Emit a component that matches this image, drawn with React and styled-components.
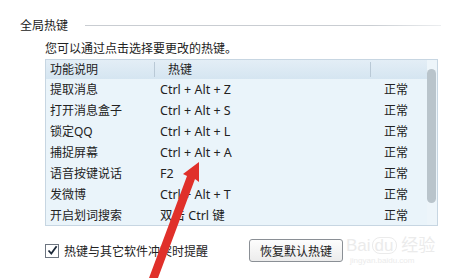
import React from 'react'
import styled, { createGlobalStyle } from 'styled-components'

const GlobalStyle = createGlobalStyle`
  body {
    margin: 0;
    background: #fff;
    font-family: "Noto Sans", "Noto Sans CJK SC", sans-serif;
    color: #222;
  }
`

const rows = [
  ['提取消息', 'Ctrl + Alt + Z'],
  ['打开消息盒子', 'Ctrl + Alt + S'],
  ['锁定QQ', 'Ctrl + Alt + L'],
  ['捕捉屏幕', 'Ctrl + Alt + A'],
  ['语音按键说话', 'F2'],
  ['发微博', 'Ctrl + Alt + T'],
  ['开启划词搜索', '双击 Ctrl 键'],
]

export default function App() {
  return (
    <>
      <GlobalStyle />
      <Page>
        <TitleRow>
          <Title>全局热键</Title>
          <Rule />
        </TitleRow>
        <Section>
          <Hint>您可以通过点击选择要更改的热键。</Hint>
          <Table>
            <Body>
              <HeaderRow>
                <HeadCell>功能说明</HeadCell>
                <HeadCell $indent>热键</HeadCell>
                <HeadCell $last />
              </HeaderRow>
              {rows.map(([name, key]) => (
                <Row key={name}>
                  <Cell>{name}</Cell>
                  <Cell $key>{key}</Cell>
                  <Cell $status>正常</Cell>
                </Row>
              ))}
            </Body>
            <Scrollbar>
              <Thumb />
            </Scrollbar>
          </Table>
          <Footer>
            <CheckLabel>
              <CheckBox>
                <svg width="11" height="11" viewBox="0 0 11 11">
                  <path d="M1.5 5.5 L4.3 8.6 L9.6 1.2" fill="none" stroke="#1d2a3a" strokeWidth="1.8" />
                </svg>
              </CheckBox>
              热键与其它软件冲突时提醒
            </CheckLabel>
            <Button>恢复默认热键</Button>
          </Footer>
        </Section>
        <Watermark>
          <Brand>Bai<Paw>du</Paw> 经验</Brand>
          <Url>jingyan.baidu.com</Url>
        </Watermark>
        <Arrow width="453" height="278" viewBox="0 0 453 278">
          <path d="M149 278 L187 176 L183 174 L199 162 L199 182 L195 179 L158 278 Z" fill="#e0302a" />
        </Arrow>
      </Page>
    </>
  )
}

const Page = styled.div`
  position: relative;
  width: 453px;
  height: 278px;
  overflow: hidden;
  padding: 16px 0 0 20px;
  box-sizing: border-box;
  font-size: 12px;
`

const TitleRow = styled.div`
  display: flex;
  align-items: center;
  gap: 17px;
  height: 18px;
`

const Title = styled.div`
  font-size: 12px;
  color: #222;
`

const Rule = styled.div`
  flex: 1;
  height: 1px;
  margin-right: 12px;
  background: linear-gradient(to right, #c9cdd2 0%, #c9cdd2 80%, #eceef0 100%);
`

const Section = styled.div`
  padding-left: 25px;
  width: 393px;
`

const Hint = styled.div`
  margin-top: 4px;
  height: 21px;
  line-height: 21px;
`

const Table = styled.div`
  display: flex;
  border: 1px solid #c7d6e2;
  background: #eaf4fa;
  height: 167px;
  box-sizing: border-box;
`

const Body = styled.div`
  flex: 1;
`

const HeaderRow = styled.div`
  display: grid;
  grid-template-columns: 109px 216px 1fr;
  height: 19px;
  background: linear-gradient(to bottom, #e3eef6, #d5e5f1);
`

const HeadCell = styled.div`
  padding-left: ${p => (p.$indent ? '13px' : '4px')};
  border-right: ${p => (p.$last ? 'none' : '1px solid #b9c9d6')};
  margin: 2px 0;
  line-height: 15px;
`

const Row = styled.div`
  display: grid;
  grid-template-columns: 109px 216px 1fr;
  height: 21px;
  line-height: 21px;
`

const Cell = styled.div`
  padding-left: ${p => (p.$status ? '13px' : p.$key ? '5px' : '4px')};
  white-space: nowrap;
  font-size: ${p => (p.$key ? '12.5px' : '12px')};
`

const Scrollbar = styled.div`
  width: 10px;
  padding-top: 9px;
  background: #edf5fa;
`

const Thumb = styled.div`
  width: 9px;
  height: 134px;
  border-radius: 5px;
  background: #b9c4cb;
`

const Footer = styled.div`
  display: flex;
  align-items: center;
  margin-top: 13px;
  height: 23px;
`

const CheckLabel = styled.label`
  display: flex;
  align-items: center;
  gap: 5px;
  width: 204px;
`

const CheckBox = styled.span`
  display: inline-flex;
  align-items: center;
  justify-content: center;
  width: 12px;
  height: 12px;
  border: 1px solid #6d7580;
  background: #fff;
`

const Button = styled.button`
  width: 94px;
  height: 23px;
  border: 1px solid #8a8f95;
  border-radius: 3px;
  background: linear-gradient(to bottom, #fdfdfd, #ececec);
  font-family: "Noto Sans CJK SC", sans-serif;
  font-size: 12px;
  color: #222;
  padding: 0;
`

const Watermark = styled.div`
  position: absolute;
  left: 346px;
  top: 236px;
  color: #ebebeb;
`

const Brand = styled.div`
  font-family: "Liberation Sans", "Noto Sans CJK SC", sans-serif;
  font-size: 17px;
  line-height: 20px;
`

const Paw = styled.span`
  display: inline-block;
  border: 1px solid #ebebeb;
  border-radius: 8px;
  padding: 0 2px;
  line-height: 15px;
  margin-left: 1px;
`

const Url = styled.div`
  font-family: "Liberation Sans", sans-serif;
  font-size: 8px;
  margin-left: 4px;
`

const Arrow = styled.svg`
  position: absolute;
  left: 0;
  top: 0;
  pointer-events: none;
`
